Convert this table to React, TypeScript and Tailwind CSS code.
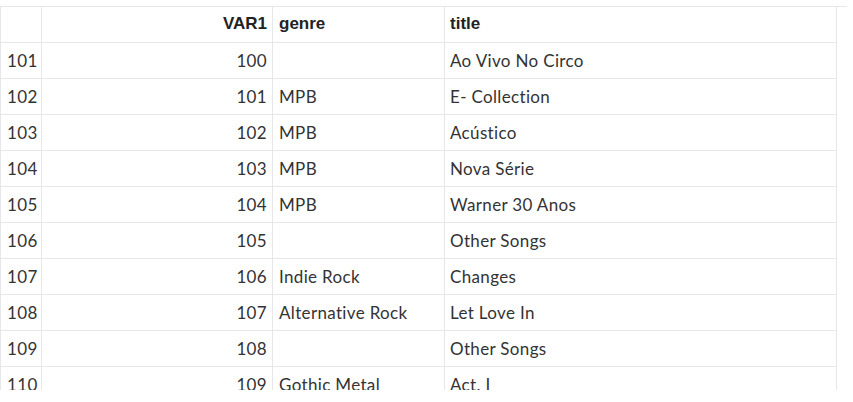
const ROWS: [number, number, string, string][] = [
  [101, 100, '', 'Ao Vivo No Circo'],
  [102, 101, 'MPB', 'E- Collection'],
  [103, 102, 'MPB', 'Acústico'],
  [104, 103, 'MPB', 'Nova Série'],
  [105, 104, 'MPB', 'Warner 30 Anos'],
  [106, 105, '', 'Other Songs'],
  [107, 106, 'Indie Rock', 'Changes'],
  [108, 107, 'Alternative Rock', 'Let Love In'],
  [109, 108, '', 'Other Songs'],
  [110, 109, 'Gothic Metal', 'Act. I'],
]

const cell = 'h-[36px] border-r border-b border-[#e6e7ea] flex items-center'
const head = 'h-[36px] border-r border-b border-[#e6e7ea] flex items-start pt-[4px] font-bold text-[17px] tracking-normal text-[#222] font-["Liberation_Sans",Arial,sans-serif]'

export default function App() {
  return (
    <div className="w-[853px] h-[402px] bg-white pt-[6px] overflow-hidden">
      <div className="w-[847px] h-[384px] border-t border-[#e6e7ea] overflow-hidden">
        <div className="grid grid-cols-[42px_231px_172px_392px] w-[837px] text-[17px] tracking-[0.02em] text-[#333] font-['Lato',sans-serif]">
          <div className={`${head} border-l`}></div>
          <div className={`${head} justify-end pr-[5px]`}>VAR1</div>
          <div className={`${head} pl-[6px]`}>genre</div>
          <div className={`${head} pl-[5px]`}>title</div>
          {ROWS.map(r => (
            <>
              <div key={`a${r[0]}`} className={`${cell} border-l pl-[6px]`}>{r[0]}</div>
              <div key={`b${r[0]}`} className={`${cell} justify-end pr-[5px]`}>{r[1]}</div>
              <div key={`c${r[0]}`} className={`${cell} pl-[6px]`}>{r[2]}</div>
              <div key={`d${r[0]}`} className={`${cell} pl-[5px]`}>{r[3]}</div>
            </>
          ))}
        </div>
      </div>
    </div>
  )
}
